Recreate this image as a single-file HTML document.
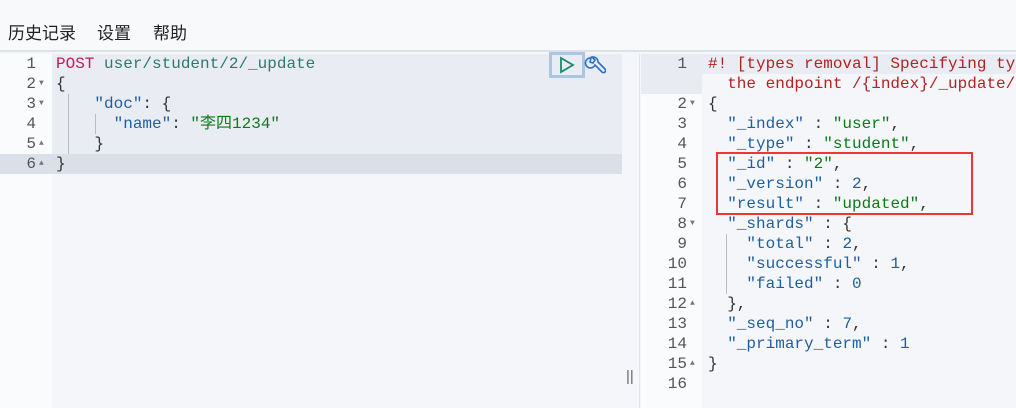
<!DOCTYPE html>
<html><head><meta charset="utf-8"><style>
*{margin:0;padding:0;box-sizing:border-box}
html,body{width:1016px;height:408px;overflow:hidden}
body{background:#f5f6fa;position:relative;font-family:"Liberation Mono","Noto Sans CJK SC",monospace;font-size:16px}
.top{position:absolute;left:0;top:0;width:1016px;height:52px;background:#f8f9fb;border-bottom:2px solid #dde1e8}
.menu{position:absolute;top:19px;font-family:"Liberation Sans","Noto Sans CJK SC",sans-serif;font-size:17px;color:#222}
.abs{position:absolute}
.ln{position:absolute;height:20px;line-height:20px;color:#555;text-align:right;white-space:pre}
.cd{position:absolute;height:20px;line-height:20px;white-space:pre;color:#333}
.k{color:#1f5fa0}.s{color:#0a7a1a}.n{color:#1f5fa0}.m{color:#c2185b}.u{color:#2b7a6b}.c{color:#b22222}
.fold{position:absolute;font-size:8px;color:#777;line-height:20px;height:20px}
.clip{position:absolute;left:641px;top:54px;width:375px;height:354px;overflow:hidden}
</style></head><body>
<div class="top"></div>
<div class="menu" style="left:8px">历史记录</div>
<div class="menu" style="left:97px">设置</div>
<div class="menu" style="left:153px">帮助</div>
<!-- left -->
<div class="abs" style="left:0;top:54px;width:52px;height:354px;background:#fafbfd"></div>
<div class="abs" style="left:52px;top:54px;width:570px;height:100px;background:#e9ecf3"></div>
<div class="abs" style="left:0;top:154px;width:622px;height:20px;background:#dbe0e8"></div>
<div class="abs" style="left:622px;top:54px;width:18px;height:354px;background:#f5f6fa;border-right:1px solid #e2e5ec"></div>
<div class="abs" style="left:626px;top:368px;font-family:'Liberation Sans';font-size:15px;color:#666">||</div>
<div class="abs" style="left:549px;top:52px;width:36px;height:26px;border:3px solid #a9c6e2;background:#e9ecf3"></div>
<svg class="abs" style="left:558px;top:56px" width="18" height="18"><path d="M3 2 L15 9 L3 16 Z" fill="none" stroke="#1a8a6a" stroke-width="1.8"/></svg>
<svg class="abs" style="left:584px;top:56px" width="22" height="22"><path d="M7 2 a5 5 0 1 0 4 7 l7 7 a2 2 0 0 0 3 -3 l-7 -7 a5 5 0 0 0 -6 -5 l3 3 -2 3 -3 -1z" fill="none" stroke="#2b6fc0" stroke-width="1.6"/></svg>
<div class="ln" style="left:0;top:54px;width:36px">1
2
3
4
5
6</div>
<div class="fold" style="left:39px;top:74px">▼</div>
<div class="fold" style="left:39px;top:94px">▼</div>
<div class="fold" style="left:39px;top:134px">▲</div>
<div class="fold" style="left:39px;top:154px">▲</div>
<div class="abs" style="left:68px;top:94px;width:1px;height:60px;background:#bbb"></div>
<div class="abs" style="left:95px;top:114px;width:1px;height:20px;background:#bbb"></div>
<div class="cd" style="left:56px;top:54px"><span class="m">POST</span> <span class="u">user/student/2/_update</span></div>
<div class="cd" style="left:56px;top:74px">{</div>
<div class="cd" style="left:56px;top:94px">    <span class="k">"doc"</span>: {</div>
<div class="cd" style="left:56px;top:114px">      <span class="k">"name"</span>: <span class="s">"李四1234"</span></div>
<div class="cd" style="left:56px;top:134px">    }</div>
<div class="cd" style="left:56px;top:154px">}</div>
<!-- right -->
<div class="clip">
<div class="abs" style="left:0;top:0;width:61px;height:354px;background:#fafbfd"></div>
<div class="abs" style="left:0;top:0;width:61px;height:40px;background:#e8ebf2"></div>
<div class="abs" style="left:61px;top:0;width:314px;height:20px;background:#e9ecf3"></div>
<div class="ln" style="left:0;top:0;width:46px">1</div>
<div class="ln" style="left:0;top:40px;width:46px">2
3
4
5
6
7
8
9
10
11
12
13
14
15
16</div>
<div class="fold" style="left:49px;top:40px">▼</div>
<div class="fold" style="left:49px;top:160px">▼</div>
<div class="fold" style="left:49px;top:240px">▲</div>
<div class="fold" style="left:49px;top:300px">▲</div>
<div class="cd c" style="left:67px;top:0">#! [types removal] Specifying types</div>
<div class="cd c" style="left:67px;top:20px">  the endpoint /{index}/_update/{id}</div>
<div class="cd" style="left:67px;top:40px">{</div>
<div class="cd" style="left:67px;top:60px">  <span class="k">"_index"</span> : <span class="s">"user"</span>,</div>
<div class="cd" style="left:67px;top:80px">  <span class="k">"_type"</span> : <span class="s">"student"</span>,</div>
<div class="cd" style="left:67px;top:100px">  <span class="k">"_id"</span> : <span class="s">"2"</span>,</div>
<div class="cd" style="left:67px;top:120px">  <span class="k">"_version"</span> : <span class="n">2</span>,</div>
<div class="cd" style="left:67px;top:140px">  <span class="k">"result"</span> : <span class="s">"updated"</span>,</div>
<div class="cd" style="left:67px;top:160px">  <span class="k">"_shards"</span> : {</div>
<div class="abs" style="left:85px;top:180px;width:1px;height:60px;background:#bbb"></div>
<div class="cd" style="left:67px;top:180px">    <span class="k">"total"</span> : <span class="n">2</span>,</div>
<div class="cd" style="left:67px;top:200px">    <span class="k">"successful"</span> : <span class="n">1</span>,</div>
<div class="cd" style="left:67px;top:220px">    <span class="k">"failed"</span> : <span class="n">0</span></div>
<div class="cd" style="left:67px;top:240px">  },</div>
<div class="cd" style="left:67px;top:260px">  <span class="k">"_seq_no"</span> : <span class="n">7</span>,</div>
<div class="cd" style="left:67px;top:280px">  <span class="k">"_primary_term"</span> : <span class="n">1</span></div>
<div class="cd" style="left:67px;top:300px">}</div>
<div class="abs" style="left:75px;top:98px;width:257px;height:63px;border:2px solid #f03535"></div>
</div>
</body></html>
